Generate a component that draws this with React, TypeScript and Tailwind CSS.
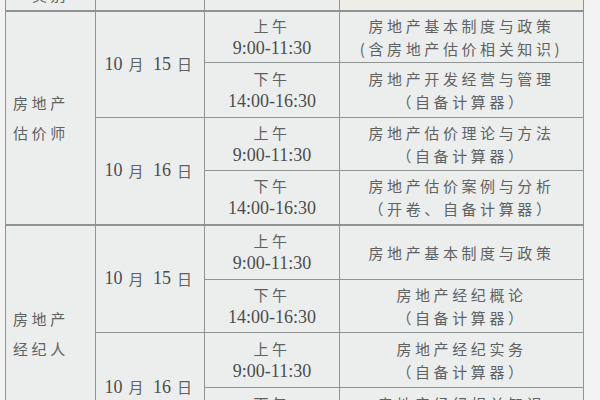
import React from "react";

const cjk = "'Noto Sans CJK SC', 'Noto Sans', sans-serif";
const serif = "'Liberation Serif', 'Noto Sans CJK SC', serif";

function Zh({ children }: { children: React.ReactNode }) {
  return (
    <span className="text-[15px] tracking-[3.6px] text-[#5e6263]" style={{ fontFamily: cjk }}>
      {children}
    </span>
  );
}

function Num({ children }: { children: React.ReactNode }) {
  return (
    <span className="text-[18px] text-[#4a4d4e]" style={{ fontFamily: serif }}>
      {children}
    </span>
  );
}

function DateText({ d }: { d: string }) {
  return (
    <div className="flex items-center justify-center gap-[6px]">
      <Num>10</Num>
      <Zh>月</Zh>
      <Num>{d}</Num>
      <Zh>日</Zh>
    </div>
  );
}

function Time({ am }: { am: boolean }) {
  return (
    <div className="flex flex-col items-center leading-[23px]">
      <Zh>{am ? "上午" : "下午"}</Zh>
      <Num>{am ? "9:00-11:30" : "14:00-16:30"}</Num>
    </div>
  );
}

function Subj({ a, b }: { a: string; b?: string }) {
  return (
    <div className="flex flex-col items-center leading-[23px]">
      <Zh>{a}</Zh>
      {b && <Zh>{b}</Zh>}
    </div>
  );
}

const td = "border-[1.5px] border-[#8e9394] text-center align-middle p-0";

export default function App() {
  return (
    <div className="w-[600px] h-[400px] overflow-hidden bg-[#f2f3f2]">
      <table
        className="ml-[5px] -mt-[20px] table-fixed border-collapse bg-[#eceeed]"
        style={{ width: 578 }}
      >
        <colgroup>
          <col style={{ width: 90 }} />
          <col style={{ width: 109 }} />
          <col style={{ width: 135 }} />
          <col style={{ width: 244 }} />
        </colgroup>
        <tbody>
          <tr className="h-[30px]">
            <td className={td + " border-b-2"}>
              <Zh>类别</Zh>
            </td>
            <td className={td + " border-b-2"}></td>
            <td className={td + " border-b-2"}></td>
            <td className={td + " border-b-2 bg-[#efeee6]"}></td>
          </tr>
          <tr className="h-[52px]">
            <td rowSpan={4} className={td + " text-left pl-[7px]"}>
              <div className="flex flex-col leading-[30px]">
                <Zh>房地产</Zh>
                <Zh>估价师</Zh>
              </div>
            </td>
            <td rowSpan={2} className={td}>
              <DateText d="15" />
            </td>
            <td className={td}>
              <Time am />
            </td>
            <td className={td}>
              <Subj a="房地产基本制度与政策" b="(含房地产估价相关知识)" />
            </td>
          </tr>
          <tr className="h-[55px]">
            <td className={td}>
              <Time am={false} />
            </td>
            <td className={td}>
              <Subj a="房地产开发经营与管理" b="（自备计算器）" />
            </td>
          </tr>
          <tr className="h-[53px]">
            <td rowSpan={2} className={td}>
              <DateText d="16" />
            </td>
            <td className={td}>
              <Time am />
            </td>
            <td className={td}>
              <Subj a="房地产估价理论与方法" b="（自备计算器）" />
            </td>
          </tr>
          <tr className="h-[54px]">
            <td className={td + " border-b-2"}>
              <Time am={false} />
            </td>
            <td className={td + " border-b-2"}>
              <Subj a="房地产估价案例与分析" b="（开卷、自备计算器）" />
            </td>
          </tr>
          <tr className="h-[55px]">
            <td rowSpan={4} className={td + " text-left pl-[7px] border-t-2"}>
              <div className="flex flex-col leading-[30px]">
                <Zh>房地产</Zh>
                <Zh>经纪人</Zh>
              </div>
            </td>
            <td rowSpan={2} className={td + " border-t-2"}>
              <DateText d="15" />
            </td>
            <td className={td + " border-t-2"}>
              <Time am />
            </td>
            <td className={td + " border-t-2"}>
              <Subj a="房地产基本制度与政策" />
            </td>
          </tr>
          <tr className="h-[53px]">
            <td className={td}>
              <Time am={false} />
            </td>
            <td className={td}>
              <Subj a="房地产经纪概论" b="（自备计算器）" />
            </td>
          </tr>
          <tr className="h-[55px]">
            <td rowSpan={2} className={td}>
              <DateText d="16" />
            </td>
            <td className={td}>
              <Time am />
            </td>
            <td className={td}>
              <Subj a="房地产经纪实务" b="（自备计算器）" />
            </td>
          </tr>
          <tr className="h-[55px]">
            <td className={td}>
              <Time am={false} />
            </td>
            <td className={td}>
              <Subj a="房地产经纪相关知识" b="（自备计算器）" />
            </td>
          </tr>
        </tbody>
      </table>
    </div>
  );
}
